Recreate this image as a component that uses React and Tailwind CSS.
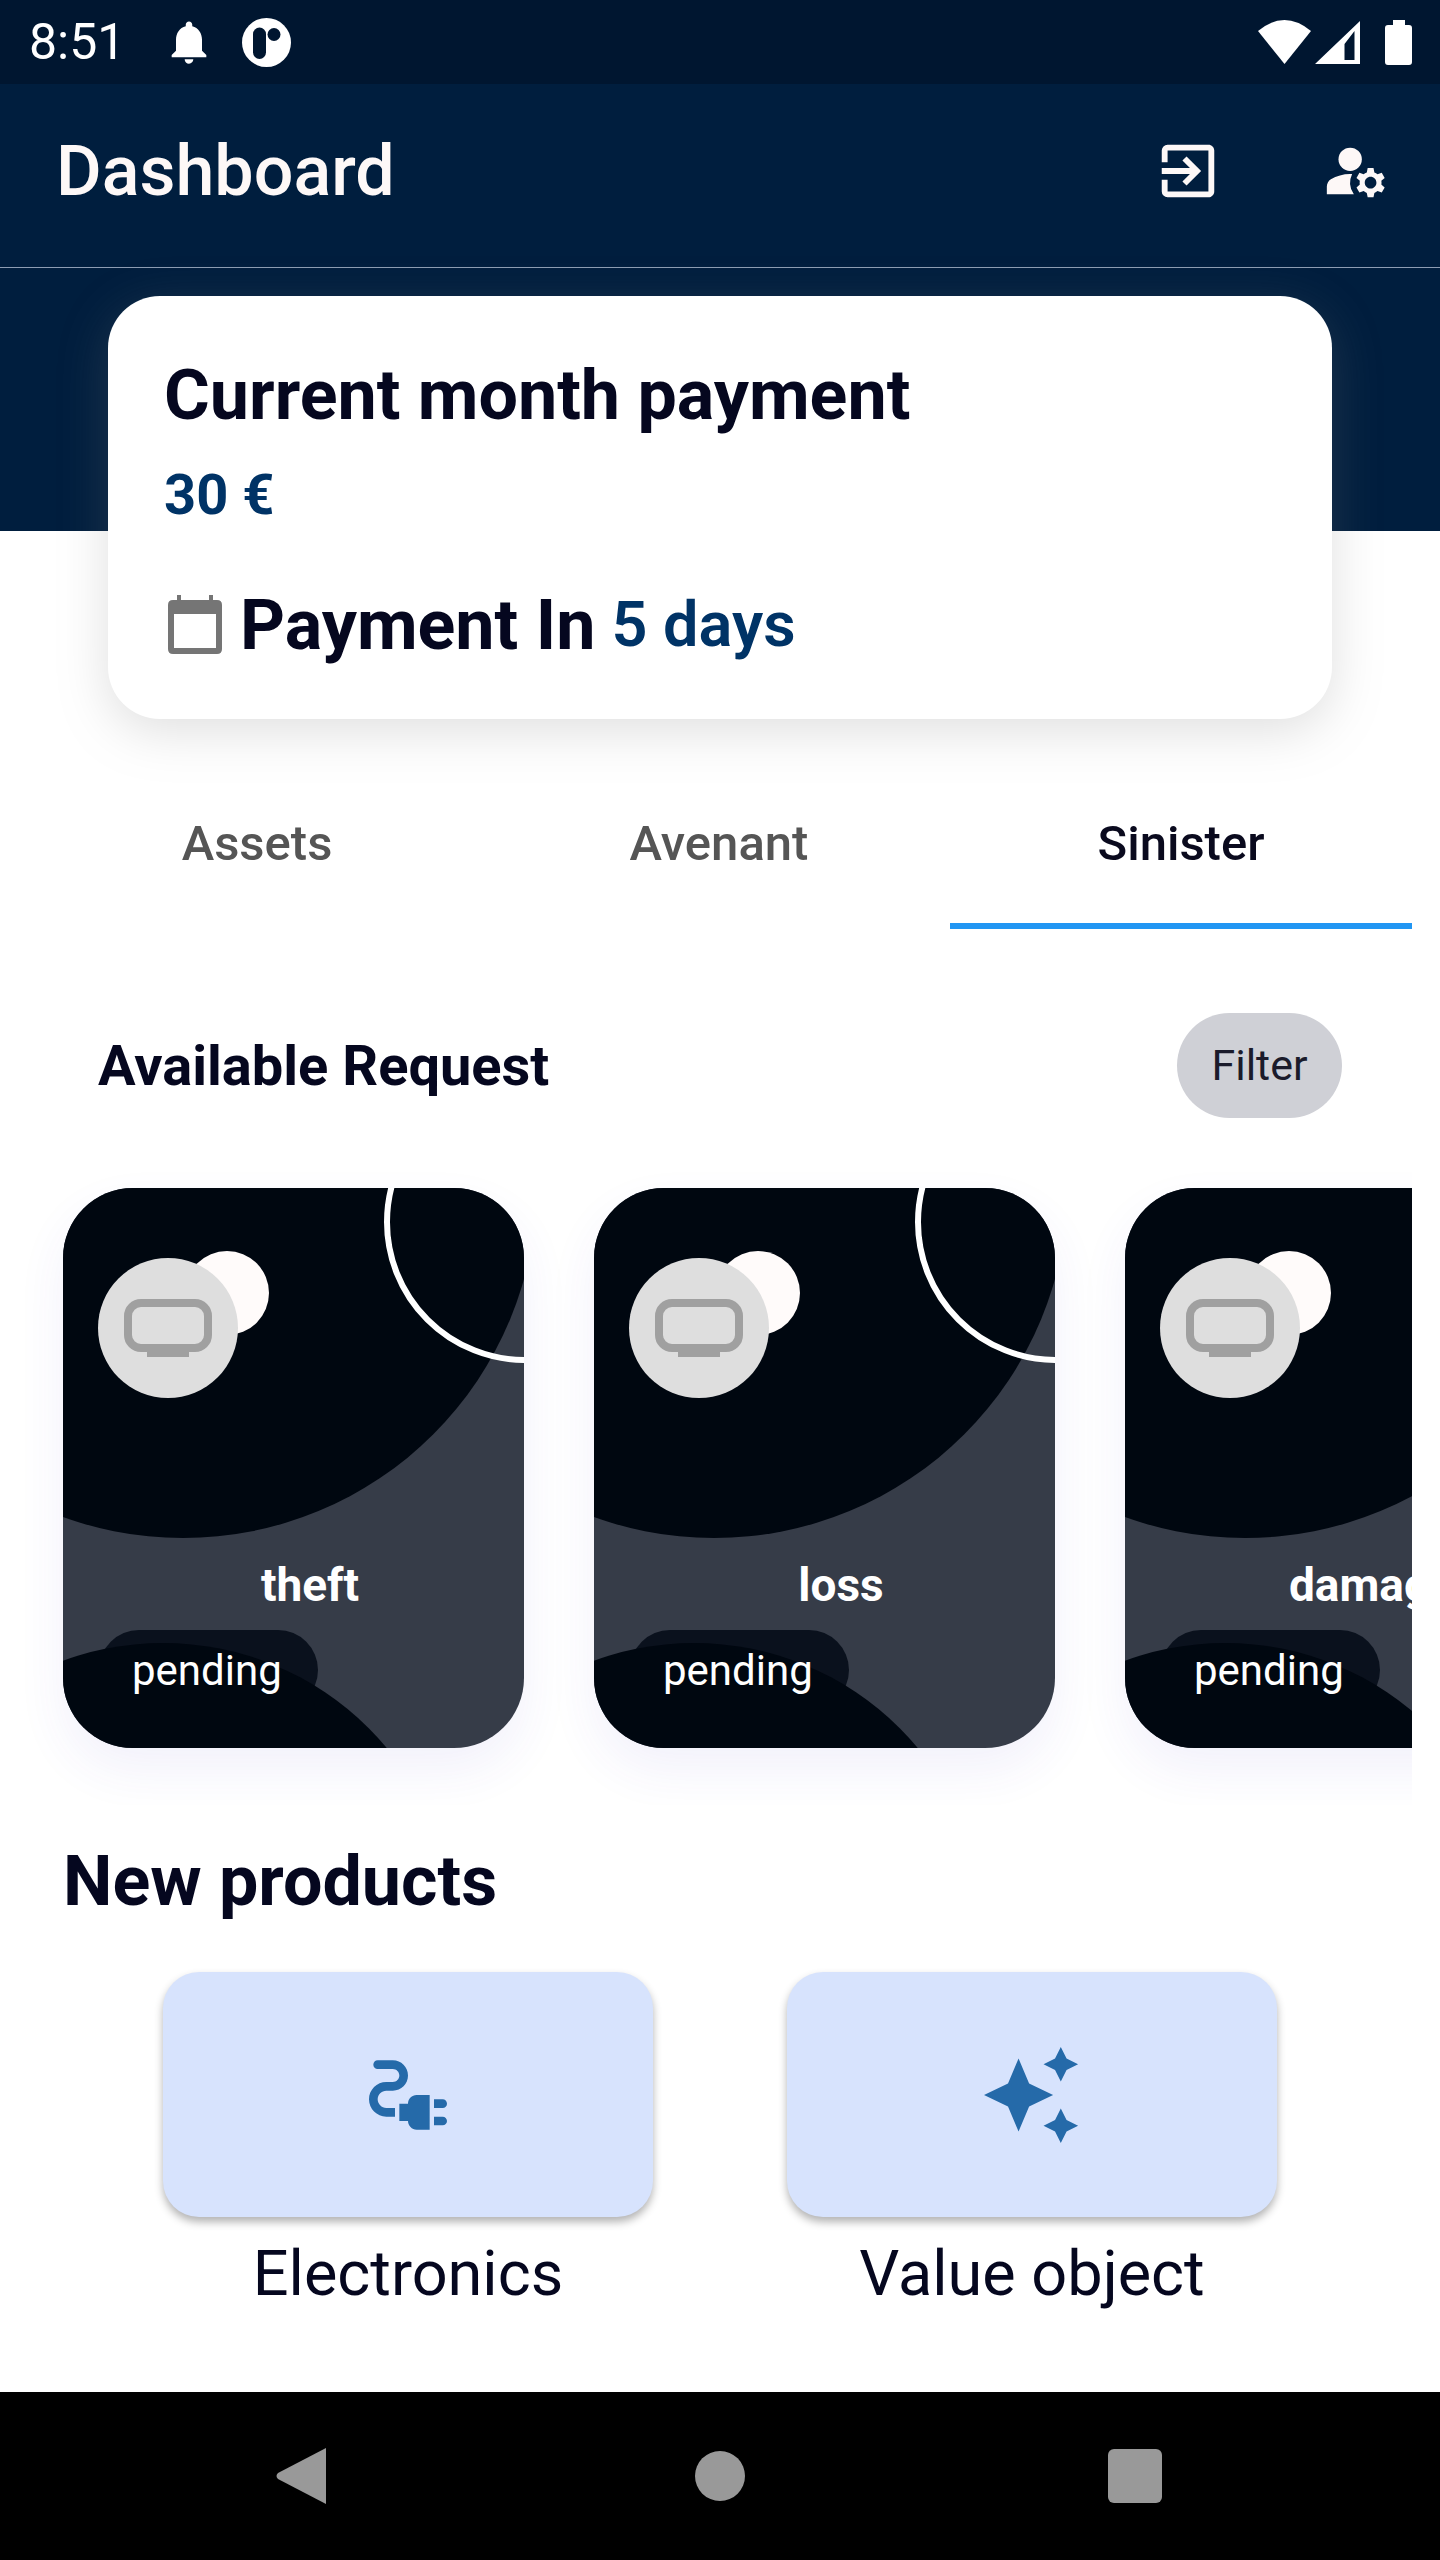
import React from "react";
import { MdNotifications, MdExitToApp, MdManageAccounts, MdElectricalServices } from "react-icons/md";

function Sinister({ title }) {
  return (
    <div className="relative w-[461px] h-[560px] shrink-0 rounded-[70px] overflow-hidden bg-[#363c48]">
      <div className="absolute left-[-234px] top-[-358px] w-[708px] h-[708px] rounded-full bg-[#000710]" />
      <div className="absolute left-[321px] top-[-107px] w-[282px] h-[282px] rounded-full border-[6px] border-white" />
      <div className="absolute left-[122px] top-[63px] w-[84px] h-[84px] rounded-full bg-[#fffbfa]" />
      <div className="absolute left-[35px] top-[70px] w-[140px] h-[140px] rounded-full bg-[#dedede] flex items-center justify-center">
        <svg width="88" height="58" viewBox="0 0 88 58">
          <rect x="4" y="4" width="80" height="45" rx="13" fill="none" stroke="#a0a0a0" strokeWidth="8" />
          <rect x="23" y="48" width="42" height="10" fill="#a0a0a0" />
        </svg>
      </div>
      <div className="absolute left-[36px] top-[442px] w-[219px] h-[80px] rounded-[40px] bg-[#0a111d]" />
      <div className="absolute left-[-191px] top-[455px] w-[582px] h-[582px] rounded-full bg-[#000710]" />
      <div className="absolute left-[32px] w-[430px] top-[371px] text-center text-white font-bold text-[46px] leading-[52px] whitespace-nowrap">{title}</div>
      <div className="absolute left-[69px] top-[451px] text-white text-[42px] leading-[64px]">pending</div>
    </div>
  );
}

function Tab({ label, active }) {
  return (
    <div className={"w-[462px] h-[172px] flex items-center justify-center text-[49px] font-medium border-b-[6px] pt-[8px] " + (active ? "text-[#0a0a1e] border-[#2196f3]" : "text-[#555555] border-transparent")}>
      {label}
    </div>
  );
}

function Product({ label, children }) {
  return (
    <div className="w-[490px] flex flex-col items-center">
      <div className="w-full h-[245px] rounded-[36px] bg-[#d7e3fd] shadow-[0_5px_8px_rgba(0,0,0,0.3)] flex items-center justify-center">
        {children}
      </div>
      <div className="mt-[22px] text-[63px] leading-[70px] text-[#05071f]">{label}</div>
    </div>
  );
}

export default function App() {
  return (
    <div className="w-[1440px] h-[2560px] bg-white flex flex-col overflow-hidden font-['Roboto',sans-serif]">
      <div className="h-[84px] bg-[#001630] flex items-center justify-between text-white shrink-0">
        <div className="flex items-center">
          <span className="ml-[29px] text-[50px] leading-none">8:51</span>
          <MdNotifications size={52} className="ml-[38px]" />
          <svg width="49" height="49" viewBox="0 0 49 49" className="ml-[27px]">
            <circle cx="24.5" cy="24.5" r="24.5" fill="#fff" />
            <rect x="11" y="9.5" width="13" height="31.5" rx="6.5" fill="#001630" />
            <circle cx="32" cy="16.5" r="6.5" fill="#001630" />
          </svg>
        </div>
        <div className="flex items-center mr-[28px]">
          <svg width="53" height="44" viewBox="0 0 53 44"><path d="M0 11Q26.5 -11 53 11L26.5 44Z" fill="#fff" /></svg>
          <svg width="45" height="43" viewBox="0 0 45 43" className="ml-[4px]"><path fillRule="evenodd" d="M0 43L45 0V43ZM29.5 39H39.5V10L29.5 23Z" fill="#fff" /></svg>
          <svg width="27" height="45" viewBox="0 0 27 45" className="ml-[25px]"><path d="M8 0H20V5H24Q27 5 27 8V42Q27 45 24 45H3Q0 45 0 42V8Q0 5 3 5H8Z" fill="#fff" /></svg>
        </div>
      </div>
      <div className="h-[184px] shrink-0 bg-[#001e3e] border-b-[1px] border-[#8d9db3] flex items-center text-[#fdf8f7] pb-[10px]">
        <h1 className="ml-[56px] text-[70px] leading-none font-medium">Dashboard</h1>
        <MdExitToApp size={70} className="ml-auto" />
        <MdManageAccounts size={70} className="ml-[98px] mr-[49px]" />
      </div>
      <div className="h-[263px] shrink-0 bg-[#001e3e]" />
      <div className="relative -mt-[235px] ml-[108px] w-[1224px] h-[423px] shrink-0 bg-white rounded-[52px] shadow-[0_12px_50px_rgba(128,128,128,0.25)] pl-[56px] pt-[60px]">
        <div className="text-[70px] leading-[78px] font-bold text-[#05071f]">Current month payment</div>
        <div className="mt-[31px] text-[56px] leading-[60px] font-bold text-[#003366]">30 €</div>
        <div className="mt-[61px] flex items-center">
          <svg width="54" height="60" viewBox="0 0 54 60" className="ml-[4px]">
            <path fillRule="evenodd" d="M9 0H13V5H41V0H45V5H49Q54 5 54 10V54Q54 59 49 59H5Q0 59 0 54V10Q0 5 5 5H9ZM6 19V53H48V19Z" fill="#757575" />
          </svg>
          <span className="ml-[18px] text-[70px] leading-[78px] font-bold text-[#05071f]">Payment In</span>
          <span className="ml-[16px] text-[63px] leading-[78px] font-semibold text-[#003366]">5 days</span>
        </div>
      </div>
      <div className="ml-[26px] mt-[38px] flex h-[172px] shrink-0">
        <Tab label="Assets" />
        <Tab label="Avenant" />
        <Tab label="Sinister" active />
      </div>
      <div className="mt-[84px] ml-[98px] mr-[98px] h-[105px] flex items-center justify-between shrink-0">
        <span className="text-[56px] font-bold text-[#05071f]">Available Request</span>
        <span className="w-[165px] h-[105px] rounded-full bg-[#cfd0d6] flex items-center justify-center text-[43px] text-[#1b1b2b]">Filter</span>
      </div>
      <div className="mt-[10px] w-[1412px] h-[677px] pl-[63px] pt-[60px] flex items-start gap-[70px] overflow-hidden shrink-0">
        <div className="contents [&>*]:shadow-[0_22px_50px_rgba(70,60,200,0.07)]">
          <Sinister title="theft" />
          <Sinister title="loss" />
          <Sinister title="damage" />
        </div>
      </div>
      <div className="mt-[36px] ml-[63px] text-[70px] leading-[80px] font-bold text-[#05071f] shrink-0">New products</div>
      <div className="mt-[51px] ml-[163px] flex gap-[134px] shrink-0">
        <Product label="Electronics">
          <MdElectricalServices size={104} color="#256aa9" />
        </Product>
        <Product label="Value object">
          <svg width="96" height="96" viewBox="0 0 100 100" fill="#256aa9">
            <path d="M36 12L47 38L72 50L47 62L36 88L25 62L0 50L25 38Z" />
            <path d="M80 0L86 12L98 18L86 24L80 36L74 24L62 18L74 12Z" />
            <path d="M80 64L86 76L98 82L86 88L80 100L74 88L62 82L74 76Z" />
          </svg>
        </Product>
      </div>
      <div className="mt-auto h-[168px] bg-black flex items-center shrink-0">
        <svg width="50" height="56" viewBox="0 0 50 56" className="ml-[276px]"><path d="M50 0V56L2 31Q-1 28 2 25Z" fill="#999" /></svg>
        <div className="ml-[369px] w-[50px] h-[50px] rounded-full bg-[#999]" />
        <div className="ml-[363px] w-[54px] h-[54px] rounded-[6px] bg-[#999]" />
      </div>
    </div>
  );
}
